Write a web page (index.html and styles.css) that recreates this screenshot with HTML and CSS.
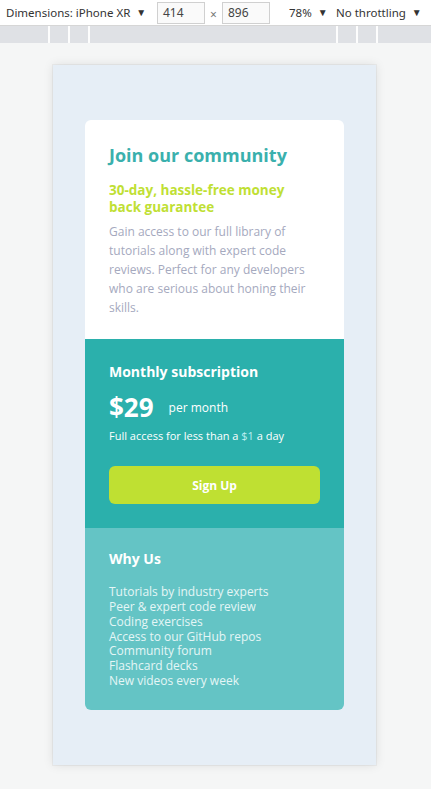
FILE: index.html
```html
<!DOCTYPE html>
<html lang="en">
<head>
<meta charset="utf-8">
<title>Join our community</title>
<link rel="stylesheet" href="styles.css">
</head>
<body>
  <div class="toolbar">
    <span class="tb-item tb-dims">Dimensions: iPhone XR <span class="caret">▼</span></span>
    <span class="tb-input">414</span>
    <span class="tb-times">×</span>
    <span class="tb-input">896</span>
    <span class="tb-item tb-zoom">78% <span class="caret">▼</span></span>
    <span class="tb-item tb-throttle">No throttling <span class="caret">▼</span></span>
  </div>
  <div class="ruler">
    <span class="seg seg-a"></span>
    <span class="seg seg-b"></span>
    <span class="seg seg-b"></span>
    <span class="seg seg-c"></span>
    <span class="seg seg-b"></span>
    <span class="seg seg-b"></span>
    <span class="seg seg-d"></span>
  </div>
  <div class="stage">
    <div class="device">
      <main class="card">
        <section class="intro">
          <h1 class="title">Join our community</h1>
          <h2 class="guarantee">30-day, hassle-free money back guarantee</h2>
          <p class="desc">Gain access to our full library of tutorials along with expert code reviews. Perfect for any developers who are serious about honing their skills.</p>
        </section>
        <section class="subscription">
          <h2 class="sec-title">Monthly subscription</h2>
          <div class="price-row">
            <span class="price">$29</span>
            <span class="per">per month</span>
          </div>
          <p class="full">Full access for less than a <span class="hl">$1</span> a day</p>
          <button class="signup">Sign Up</button>
        </section>
        <section class="why">
          <h2 class="sec-title">Why Us</h2>
          <ul class="why-list">
            <li>Tutorials by industry experts</li>
            <li>Peer &amp; expert code review</li>
            <li>Coding exercises</li>
            <li>Access to our GitHub repos</li>
            <li>Community forum</li>
            <li>Flashcard decks</li>
            <li>New videos every week</li>
          </ul>
        </section>
      </main>
    </div>
  </div>
</body>
</html>
```

FILE: styles.css
```css
* { box-sizing: border-box; }
html, body { margin: 0; padding: 0; }
body {
  width: 431px;
  height: 789px;
  overflow: hidden;
  background: #f5f6f6;
  font-family: "Open Sans", "Noto Sans", sans-serif;
}

/* devtools toolbar */
.toolbar {
  height: 26px;
  background: #ffffff;
  border-bottom: 1px solid #d6d6d6;
  display: flex;
  align-items: center;
  font-family: "Noto Sans", "Open Sans", sans-serif;
  font-size: 11.5px;
  color: #333;
  white-space: nowrap;
}
.tb-dims { margin-left: 6px; width: 151px; }
.caret { font-size: 10px; margin-left: 3px; position: relative; top: -1px; }
.tb-input {
  width: 48px;
  height: 22px;
  border: 1px solid #d0d0d0;
  background: #fafafa;
  padding-left: 5px;
  line-height: 20px;
  color: #444;
  font-size: 12px;
}
.tb-times { width: 17px; text-align: center; color: #777; font-size: 12px; padding-top: 3px; }
.tb-zoom { margin-left: 19px; width: 47px; }

.ruler {
  height: 17px;
  background: #fdfdfd;
  display: flex;
  gap: 2px;
}
.seg { background: #dfe1e5; height: 100%; }
.seg-a { width: 48px; }
.seg-b { width: 18px; }
.seg-c { width: 246px; }
.seg-d { flex: 1; }

/* stage */
.stage {
  padding: 22px 0 0 53px;
}
.device {
  width: 323px;
  height: 700px;
  background: #e6eef6;
  box-shadow: 0 0 10px rgba(0,0,0,0.10), 0 0 0 1px rgba(0,0,0,0.04);
  padding: 55px 32px;
  font-family: "Open Sans", sans-serif;
}
.card {
  width: 259px;
  border-radius: 6px;
  overflow: hidden;
}

.intro {
  background: #ffffff;
  padding: 23px 24px 22px;
}
.title {
  margin: 0;
  font-size: 18px;
  font-weight: 700;
  line-height: 24px;
  color: #3ab0ad;
}
.guarantee {
  margin: 15px 0 0;
  max-width: 190px;
  font-size: 13.5px;
  font-weight: 700;
  line-height: 17px;
  color: #c0df34;
}
.desc {
  margin: 6px 0 0;
  font-size: 12px;
  line-height: 19px;
  color: #a5a9be;
}

.subscription {
  background: #2bb0ac;
  padding: 22px 24px 24px;
  color: #ffffff;
}
.sec-title {
  margin: 0;
  font-size: 14px;
  font-weight: 700;
  line-height: 22px;
  color: #ffffff;
}
.price-row {
  display: flex;
  align-items: center;
  gap: 15px;
  margin-top: 10px;
  height: 28px;
}
.price { font-size: 26px; font-weight: 700; }
.per { font-size: 12px; padding-top: 1px; }
.full {
  margin: 7px 0 0;
  font-size: 11px;
  line-height: 16px;
}
.hl { color: #bdeff2; }
.signup {
  display: block;
  width: 211px;
  height: 38px;
  margin-top: 22px;
  border: none;
  border-radius: 6px;
  background: #bfe032;
  color: #ffffff;
  font-family: inherit;
  font-size: 12px;
  font-weight: 700;
  cursor: pointer;
}

.why {
  background: #64c4c5;
  padding: 20px 24px 21px;
}
.why-list {
  list-style: none;
  margin: 15px 0 0;
  padding: 0;
  font-size: 12px;
  line-height: 14.85px;
  color: #e5f6f6;
}
```
